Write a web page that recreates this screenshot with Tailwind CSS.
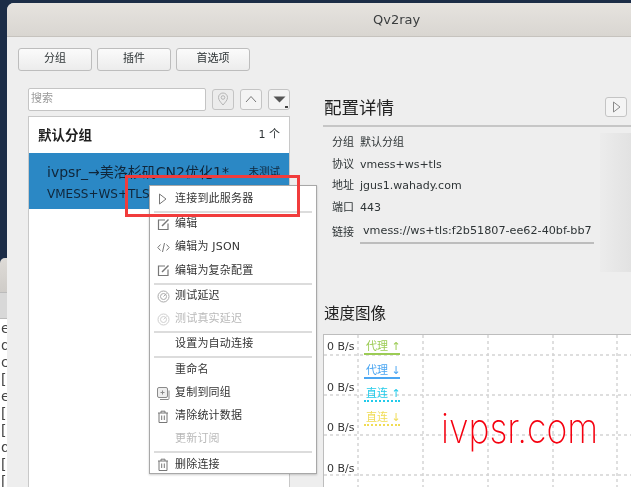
<!DOCTYPE html>
<html lang="zh-CN">
<head>
<meta charset="UTF-8">
<title>Qv2ray</title>
<script src="https://cdn.jsdelivr.net/npm/@tailwindcss/browser@4"></script>
</head>
<body class="relative w-[631px] h-[487px] overflow-hidden flex bg-[#1c2d47] text-[#2e3436] font-['DejaVu_Sans','Noto_Sans_CJK_SC',sans-serif] text-[11px]">

<!-- window behind, only its edge shows -->
<div class="w-[7px] shrink-0 flex flex-col pt-[258px] blur-[0.3px]">
  <div class="h-[35px] rounded-tl-[5px] bg-gradient-to-b from-[#dedbd7] to-[#cfccc8] border-b border-[#bbb]"></div>
  <div class="h-[26px] bg-[#d8d8d8] border-b border-[#bbb]"></div>
  <div class="flex-1 bg-white overflow-hidden text-[14px] leading-[17px] pt-[1px] pl-[1px] text-[#444]">
    <div>e</div><div>q</div><div>c</div><div>[</div><div>e</div><div>[</div><div>[</div><div>d</div><div>[</div><div>[</div>
  </div>
</div>

<div class="flex-1 mt-[3px] rounded-tl-[7px] bg-[#eeeeee] flex flex-col overflow-hidden blur-[0.3px]">
  <!-- title bar -->
  <div class="h-[34px] shrink-0 bg-gradient-to-b from-[#e6e3df] to-[#d9d6d1] border-b border-[#c6c3be] flex items-center pl-[366px] pt-[1px] text-[13px] text-[#3a3d3e]">Qv2ray</div>

  <!-- toolbar -->
  <div class="flex gap-[5px] pl-[11px] pt-[11px] h-[50px] shrink-0">
    <button class="w-[74px] h-[23px] rounded-[3px] border border-[#bdbdbd] bg-gradient-to-b from-[#fbfbfb] to-[#ececec] text-[11px]">分组</button>
    <button class="w-[74px] h-[23px] rounded-[3px] border border-[#bdbdbd] bg-gradient-to-b from-[#fbfbfb] to-[#ececec] text-[11px]">插件</button>
    <button class="w-[74px] h-[23px] rounded-[3px] border border-[#bdbdbd] bg-gradient-to-b from-[#fbfbfb] to-[#ececec] text-[11px]">首选项</button>
  </div>

  <div class="flex flex-1 min-h-0 pl-[21px]">
    <!-- left column -->
    <div class="w-[262px] shrink-0 flex flex-col">
      <div class="flex items-center h-[23px] pt-[1px]">
        <div class="w-[178px] h-[23px] rounded-[2px] border border-[#c4c4c4] bg-white flex items-center pl-[2px] pt-[1px] text-[11px] text-[#9a9a9a]">搜索</div>
        <div class="ml-[6px] w-[22px] h-[21px] rounded-[3px] border border-[#c4c4c4] bg-[#ececec] flex items-center justify-center">
          <svg width="12" height="14" viewBox="0 0 12 14" fill="none" stroke="#b5b5b5" stroke-width="1"><path d="M6 13C3.500 10 1.500 8 1.500 5.500a4.500 4.500 0 0 1 9 0C10.500 8 8.500 10 6 13z"/><circle cx="6" cy="5.500" r="1.800"/></svg>
        </div>
        <div class="ml-[6px] w-[22px] h-[21px] rounded-[3px] border border-[#c4c4c4] bg-[#f4f4f4] flex items-center justify-center">
          <svg width="12" height="8" viewBox="0 0 12 8" fill="none" stroke="#777" stroke-width="1"><path d="M1 7l5-5.500L11 7"/></svg>
        </div>
        <div class="relative ml-[6px] w-[22px] h-[21px] rounded-[3px] border border-[#c4c4c4] bg-[#f4f4f4] flex items-center justify-center">
          <svg width="13" height="7" viewBox="0 0 13 7" fill="#555"><path d="M.5 .5h12L6.500 6.500z"/></svg>
          <span class="absolute right-[1px] bottom-[1px] w-[3px] h-[2px] bg-[#444]"></span>
        </div>
      </div>
      <!-- list -->
      <div class="mt-[6px] flex-1 bg-white border border-[#c8c8c8] border-b-0">
        <div class="h-[36px] flex items-center justify-between pl-[9px] pr-[9px]">
          <span class="text-[13.500px] font-bold text-[#1f1f1f]">默认分组</span>
          <span class="text-[11px]">1 个</span>
        </div>
        <div class="h-[56px] bg-[#2b88c5] text-[#10263a] pl-[18px] pr-[9px]">
          <div class="flex justify-between items-center h-[34px] pt-[4px]">
            <span class="text-[14px] whitespace-nowrap">ivpsr_→美洛杉矶CN2优化1*</span>
            <span class="text-[10.500px]">未测试</span>
          </div>
          <div class="text-[12px] leading-[14px]">VMESS+WS+TLS</div>
        </div>
      </div>
    </div>

    <!-- right column -->
    <div class="flex-1 min-w-0 ml-[33px] flex flex-col pt-[10px]">
      <div class="flex items-center justify-between h-[20px] pr-[4px]">
        <span class="text-[17.500px] text-[#222] pl-[1px] pt-[3px]">配置详情</span>
        <div class="w-[22px] h-[20px] rounded-[3px] border border-[#c4c4c4] bg-[#f4f4f4] flex items-center justify-center">
          <svg width="9" height="12" viewBox="0 0 9 12" fill="none" stroke="#8a8a8a" stroke-width="1"><path d="M1.500 1v10L8 6z"/></svg>
        </div>
      </div>
      <div class="h-[2px] bg-[#c6c6c6] mt-[8px]"></div>
      <div class="relative flex-none">
        <div class="absolute top-[6px] right-0 w-[31px] h-[139px] bg-gradient-to-r from-[#ececec] to-[#e2e2e2]"></div>
        <div class="pl-[9px] pt-[5.500px] text-[11px]">
          <div class="flex items-center h-[21.500px]"><span class="w-[28px]">分组</span><span>默认分组</span></div>
          <div class="flex items-center h-[21.500px]"><span class="w-[28px]">协议</span><span>vmess+ws+tls</span></div>
          <div class="flex items-center h-[21.500px]"><span class="w-[28px]">地址</span><span>jgus1.wahady.com</span></div>
          <div class="flex items-center h-[21.500px]"><span class="w-[28px]">端口</span><span>443</span></div>
          <div class="flex items-center h-[28px]"><span class="w-[28px] pt-[2px]">链接</span><span class="w-[234px] h-[22px] pl-[3px] flex items-center whitespace-nowrap overflow-hidden border-b-2 border-[#bdbdbd] text-[11.200px]">vmess://ws+tls:f2b51807-ee62-40bf-bb7</span></div>
        </div>
      </div>
      <div class="mt-[57.500px] pl-[1px] text-[15.500px] leading-[20px] text-[#222]">速度图像</div>
      <!-- chart -->
      <div class="relative mt-[10px] flex-1 bg-white border border-[#bdbdbd] border-r-0 border-b-0">
        <svg class="absolute inset-0" width="310" height="155" fill="none" stroke="#d4d4d4" stroke-width="1.500" stroke-dasharray="3 3">
          <path d="M0 20H310M0 60H310M0 100H310M0 140H310"/>
          <path d="M34 0V155M99 0V155M164 0V155M229 0V155M293 0V155"/>
        </svg>
        <div class="absolute left-[3px] top-0 flex flex-col text-[11px] text-[#333]">
          <span class="h-[40.500px] pt-[4px]">0 B/s</span>
          <span class="h-[40.500px] pt-[4px]">0 B/s</span>
          <span class="h-[40.500px] pt-[4px]">0 B/s</span>
          <span class="h-[40.500px] pt-[4px]">0 B/s</span>
        </div>
        <div class="absolute left-[40px] top-[3px] flex flex-col gap-[6.500px] w-[36px] text-[11px] leading-[18px] whitespace-nowrap">
          <div class="h-[17px] pl-[2px] text-[#9ccc55] border-b-2 border-[#9ccc55]">代理 ↑</div>
          <div class="h-[17px] pl-[2px] text-[#4ba6f2] border-b-2 border-[#4ba6f2]">代理 ↓</div>
          <div class="h-[17px] pl-[2px] text-[#22cbea] border-b-2 border-dotted border-[#22cbea]">直连 ↑</div>
          <div class="h-[17px] pl-[2px] text-[#f0dc55] border-b-2 border-dotted border-[#f0dc55]">直连 ↓</div>
        </div>
      </div>
    </div>
  </div>
</div>

<!-- context menu -->
<div class="absolute left-[149px] top-[185px] w-[168px] h-[289px] pt-[1.500px] bg-white border border-[#a8a8a8] shadow-[0_1px_2px_rgba(0,0,0,0.2)] text-[11px] tracking-[0.2px] text-[#333] blur-[0.3px]">
  <div class="h-[23.250px] flex items-center pl-[8px]"><span class="w-[17px] flex"><svg width="9" height="12" viewBox="0 0 9 12" fill="none" stroke="#777" stroke-width="1"><path d="M1.500 1v10L8 6z"/></svg></span>连接到此服务器</div>
  <div class="h-[2px] mx-[4px] bg-[#dcdcdc]"></div>
  <div class="h-[23.250px] flex items-center pl-[7px]"><span class="w-[18px] flex"><svg width="13" height="13" viewBox="0 0 13 13" fill="none" stroke="#777" stroke-width="1.200"><path d="M8 2H1.500v9.500H11V5.500"/><path d="M5 8l6.500-6.500" stroke-width="1.500"/></svg></span>编辑</div>
  <div class="h-[23.250px] flex items-center pl-[7px]"><span class="w-[18px] flex"><svg width="13" height="11" viewBox="0 0 13 11" fill="none" stroke="#777" stroke-width="1"><path d="M3.500 2.500L.8 5.500l2.700 3M9.500 2.500l2.700 3-2.700 3M7.500 1L5.500 10"/></svg></span>编辑为 JSON</div>
  <div class="h-[23.250px] flex items-center pl-[7px]"><span class="w-[18px] flex"><svg width="13" height="13" viewBox="0 0 13 13" fill="none" stroke="#777" stroke-width="1.200"><path d="M8 2H1.500v9.500H11V5.500"/><path d="M5 8l6.500-6.500" stroke-width="1.500"/></svg></span>编辑为复杂配置</div>
  <div class="h-[2px] mx-[4px] bg-[#dcdcdc]"></div>
  <div class="h-[23.250px] flex items-center pl-[7px]"><span class="w-[18px] flex"><svg width="13" height="13" viewBox="0 0 13 13" fill="none" stroke="#aaa" stroke-width="1"><circle cx="6.500" cy="6.500" r="5.500"/><circle cx="6.500" cy="6.500" r="3"/><path d="M6.500 6.500l3-3"/></svg></span>测试延迟</div>
  <div class="h-[23.250px] flex items-center pl-[7px] text-[#b9b9b9]"><span class="w-[18px] flex"><svg width="13" height="13" viewBox="0 0 13 13" fill="none" stroke="#cfcfcf" stroke-width="1"><circle cx="6.500" cy="6.500" r="5.500"/><circle cx="6.500" cy="6.500" r="3"/><path d="M6.500 6.500l3-3"/></svg></span>测试真实延迟</div>
  <div class="h-[2px] mx-[4px] bg-[#dcdcdc]"></div>
  <div class="h-[23.250px] flex items-center pl-[25px]">设置为自动连接</div>
  <div class="h-[2px] mx-[4px] bg-[#dcdcdc]"></div>
  <div class="h-[23.250px] flex items-center pl-[25px]">重命名</div>
  <div class="h-[23.250px] flex items-center pl-[7px]"><span class="w-[18px] flex"><svg width="13" height="13" viewBox="0 0 13 13" fill="none" stroke="#8a8a8a" stroke-width="1"><rect x="0.500" y="0.500" width="10" height="10" rx="1.500" fill="#eee"/><path d="M12 3.500v8a1 1 0 0 1-1 1H3"/><path d="M5.500 3.500v4M3.500 5.500h4"/></svg></span>复制到同组</div>
  <div class="h-[23.250px] flex items-center pl-[7px]"><span class="w-[18px] flex"><svg width="12" height="13" viewBox="0 0 12 13" fill="none" stroke="#777" stroke-width="1"><path d="M1 3h10M4 3V1.200h4V3M2 3v9.500h8V3M4.700 5.500v4.500M7.300 5.500v4.500"/></svg></span>清除统计数据</div>
  <div class="h-[23.250px] flex items-center pl-[25px] text-[#b9b9b9]">更新订阅</div>
  <div class="h-[2px] mx-[4px] bg-[#dcdcdc]"></div>
  <div class="h-[23.250px] flex items-center pl-[7px]"><span class="w-[18px] flex"><svg width="12" height="13" viewBox="0 0 12 13" fill="none" stroke="#777" stroke-width="1"><path d="M1 3h10M4 3V1.200h4V3M2 3v9.500h8V3M4.700 5.500v4.500M7.300 5.500v4.500"/></svg></span>删除连接</div>
</div>

<!-- red annotation box -->
<div class="absolute left-[125px] top-[175px] w-[175px] h-[42px] border-[3px] border-[#f13c3c]"></div>

<!-- watermark -->
<div class="absolute left-[441px] top-[403px] text-[41px] leading-[50px] font-['Inter',sans-serif] font-extralight text-[#f5000f] whitespace-nowrap origin-left scale-x-[0.865]">ivpsr.com</div>

</body>
</html>
